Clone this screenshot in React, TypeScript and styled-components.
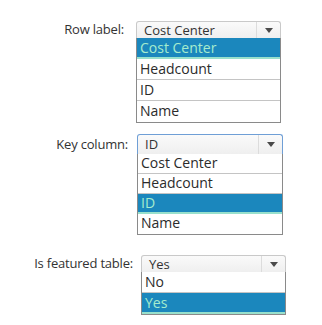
import styled, { createGlobalStyle } from "styled-components"

const Global = createGlobalStyle`
    html, body {
        margin: 0;
        padding: 0;
        background: #fff;
    }
    body {
        font-family: "Open Sans", "Noto Sans", sans-serif;
        color: #2b2b2b;
    }
`

const Page = styled.div`
    width: 322px;
    height: 325px;
    overflow: hidden;
    display: flex;
    flex-direction: column;
    padding-top: 21px;
    box-sizing: border-box;
`

const Field = styled.div<{ $labelCol: number; $gap: number; $mt: number; $width: number }>`
    display: grid;
    grid-template-columns: ${(p) => p.$labelCol}px ${(p) => p.$width}px;
    column-gap: ${(p) => p.$gap}px;
    margin-top: ${(p) => p.$mt}px;
    align-items: start;
`

const Label = styled.label<{ $h: number }>`
    text-align: right;
    font-size: 13px;
    line-height: ${(p) => p.$h}px;
    color: #333;
    white-space: nowrap;
    letter-spacing: -0.2px;
`

const Dropdown = styled.div`
    display: flex;
    flex-direction: column;
`

const Select = styled.div<{ $h: number; $focus?: boolean }>`
    height: ${(p) => p.$h}px;
    box-sizing: border-box;
    border: 1px solid ${(p) => (p.$focus ? "#6f9fd6" : "#c9c9c9")};
    border-bottom: none;
    border-radius: 3px 3px 0 0;
    background: linear-gradient(#fafafa, #efefef);
    display: flex;
    align-items: stretch;
`

const SelectText = styled.span<{ $h: number }>`
    flex: 1;
    padding-left: 7px;
    font-size: 13px;
    line-height: ${(p) => p.$h - 1}px;
    color: #333;
    white-space: nowrap;
`

const ArrowCell = styled.span`
    width: 23px;
    border-left: 1px solid #dcdcdc;
    display: flex;
    align-items: center;
    justify-content: center;
`

const Arrow = styled.span`
    width: 0;
    height: 0;
    border-left: 4px solid transparent;
    border-right: 4px solid transparent;
    border-top: 5px solid #4a4a4a;
`

const List = styled.ul`
    list-style: none;
    margin: 0;
    padding: 0;
    border: 1px solid #8a8a8a;
    border-top: none;
    background: #fff;
`

const Item = styled.li<{ $h: number; $selected?: boolean }>`
    height: ${(p) => p.$h}px;
    box-sizing: border-box;
    padding-left: 3px;
    font-size: 14px;
    line-height: ${(p) => p.$h - 2}px;
    color: ${(p) => (p.$selected ? "#a6eccd" : "#2b2b2b")};
    background: ${(p) => (p.$selected ? "#1b87bd" : "#fff")};
    border-bottom: ${(p) => (p.$selected ? "2px solid #98e0cc" : "1px solid #c4c4c4")};

    &:last-child {
        border-bottom: ${(p) => (p.$selected ? "2px solid #98e0cc" : "none")};
    }
`

type Opt = { labelCol: number; gap: number; mt: number; width: number; selectH: number; rowH: number }

function Combo(props: { label: string; value: string; options: string[]; focus?: boolean; o: Opt }) {
    const { o } = props
    return (
        <Field $labelCol={o.labelCol} $gap={o.gap} $mt={o.mt} $width={o.width}>
            <Label $h={o.selectH}>{props.label}</Label>
            <Dropdown>
                <Select $h={o.selectH} $focus={props.focus}>
                    <SelectText $h={o.selectH}>{props.value}</SelectText>
                    <ArrowCell>
                        <Arrow />
                    </ArrowCell>
                </Select>
                <List>
                    {props.options.map((opt) => (
                        <Item key={opt} $h={o.rowH} $selected={opt === props.value}>
                            {opt}
                        </Item>
                    ))}
                </List>
            </Dropdown>
        </Field>
    )
}

const colunas = ["Cost Center", "Headcount", "ID", "Name"]

function App() {
    return (
        <Page>
            <Global />
            <Combo
                label="Row label:"
                value="Cost Center"
                options={colunas}
                o={{ labelCol: 124, gap: 12, mt: 0, width: 145, selectH: 17, rowH: 21 }}
            />
            <Combo
                label="Key column:"
                value="ID"
                options={colunas}
                focus
                o={{ labelCol: 128, gap: 9, mt: 11, width: 146, selectH: 20, rowH: 20 }}
            />
            <Combo
                label="Is featured table:"
                value="Yes"
                options={["No", "Yes"]}
                o={{ labelCol: 133, gap: 8, mt: 20, width: 145, selectH: 17, rowH: 21 }}
            />
        </Page>
    )
}

export default App
